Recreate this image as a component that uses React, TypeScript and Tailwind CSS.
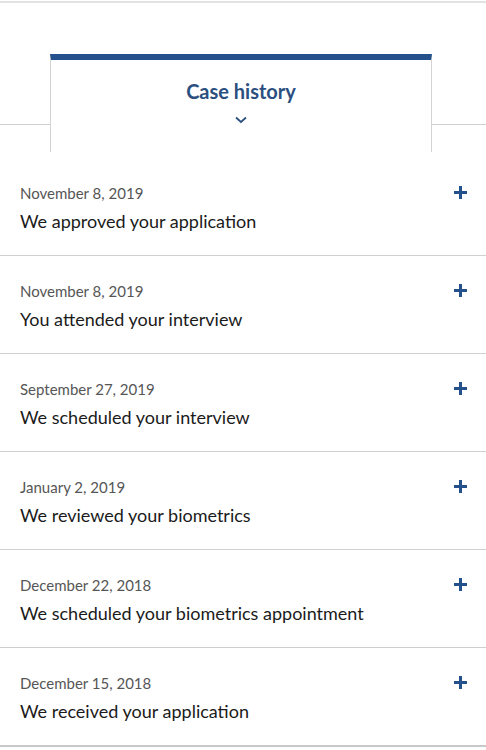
import React from "react";

const items = [
  { date: "November 8, 2019", title: "We approved your application" },
  { date: "November 8, 2019", title: "You attended your interview" },
  { date: "September 27, 2019", title: "We scheduled your interview" },
  { date: "January 2, 2019", title: "We reviewed your biometrics" },
  { date: "December 22, 2018", title: "We scheduled your biometrics appointment" },
  { date: "December 15, 2018", title: "We received your application" },
];

function Plus() {
  return (
    <svg width="13" height="13" viewBox="0 0 13 13" className="shrink-0">
      <rect x="5" y="0" width="3" height="13" fill="#24508c" />
      <rect x="0" y="5" width="13" height="3" fill="#24508c" />
    </svg>
  );
}

export default function App() {
  return (
    <div className="w-full bg-white" style={{ fontFamily: "Lato, 'Noto Sans', sans-serif" }}>
      <div className="h-[2px] mt-px bg-[#e2e2e2]" />
      <div className="flex items-start pt-[51px]">
        <div className="w-[50px] h-[71px] border-b border-[#cfcfcf]" />
        <div className="w-[382px] h-[98px] border-t-[6px] border-t-[#24508c] border-x border-x-[#d3d3d3] flex flex-col items-center pt-[19px]">
          <div className="text-[20px] leading-[24px] font-bold text-[#2b4f80]">Case history</div>
          <svg width="12" height="8" viewBox="0 0 12 8" className="mt-[13px]">
            <path d="M1 1.5 L6 6 L11 1.5" fill="none" stroke="#2b4f80" strokeWidth="1.7" />
          </svg>
        </div>
        <div className="flex-1 h-[71px] border-b border-[#cfcfcf]" />
      </div>
      <div className="mt-[6px]">
        {items.map((it, i) => (
          <div
            key={i}
            className={
              "flex items-start justify-between pl-5 pr-[19px] pt-[25px] pb-[22px] " +
              (i === items.length - 1
                ? "border-b-2 border-[#c8c8c8] shadow-[0_1px_2px_rgba(0,0,0,0.15)]"
                : "border-b border-[#d0d0d0]")
            }
          >
            <div className="flex flex-col gap-[6px]">
              <div className="text-[15px] leading-[20px] text-[#565656]">{it.date}</div>
              <div className="text-[18px] leading-[24px] text-[#1b1b1b]">{it.title}</div>
            </div>
            <div className="pt-[3px]">
              <Plus />
            </div>
          </div>
        ))}
      </div>
    </div>
  );
}
